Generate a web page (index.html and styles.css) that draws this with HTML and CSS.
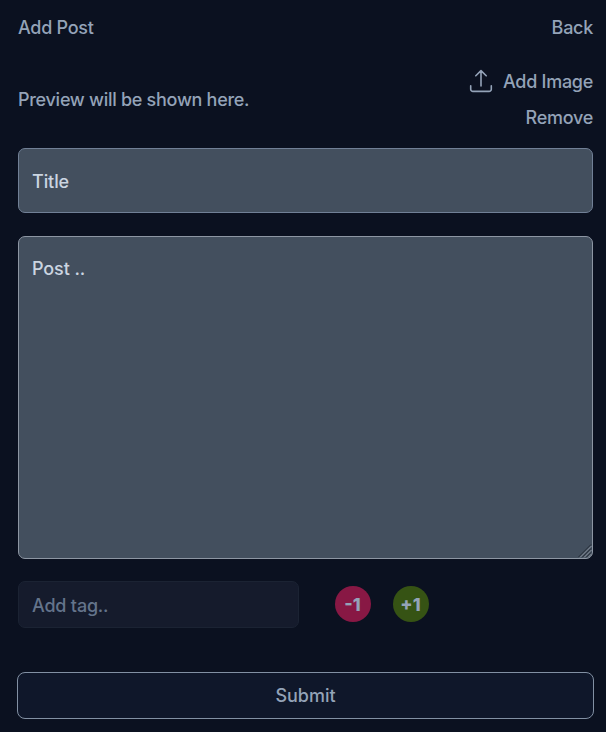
FILE: index.html
```html
<!DOCTYPE html>
<html lang="en">
<head>
<meta charset="utf-8">
<title>Add Post</title>
<link rel="stylesheet" href="styles.css">
</head>
<body>
<main class="page">
  <header class="header"><span>Add Post</span><a class="link">Back</a></header>
  <section class="preview">
    <p class="preview-text">Preview will be shown here.</p>
    <div class="image-actions">
      <label class="upload">
        <svg class="upload-icon" viewBox="0 0 24 24" fill="none" stroke="currentColor" stroke-width="1.6" stroke-linecap="round" stroke-linejoin="round"><path d="M1.7 16.8v3.4a2.2 2.2 0 0 0 2.2 2.2h16.2a2.2 2.2 0 0 0 2.2-2.2v-3.4M12 17V1.6M6.8 6.8 12 1.6l5.2 5.2"/></svg>
        <span>Add Image</span>
      </label>
      <a class="link">Remove</a>
    </div>
  </section>
  <form class="form">
    <input class="field title" placeholder="Title">
    <div class="post-wrap">
      <textarea class="field post" placeholder="Post .."></textarea>
      <svg class="grip" viewBox="0 0 14 14" fill="none"><path class="grip-dark" d="M.5 13 13 .5M4.5 13 13 4.5M8.5 13 13 8.5"/><path class="grip-light" d="M2 13.5 13.5 2M6 13.5 13.5 6M10 13.5l3.5-3.5"/></svg>
    </div>
    <div class="tags">
      <input class="field tag" placeholder="Add tag..">
      <button type="button" class="round minus">-1</button>
      <button type="button" class="round plus">+1</button>
    </div>
    <button type="button" class="submit">Submit</button>
  </form>
</main>
</body>
</html>
```
FILE: styles.css
```css
* { box-sizing: border-box; }
body {
  margin: 0;
  background: #0b1120;
  color: #94a3b8;
  font: 450 18px/36px Inter, sans-serif;
  letter-spacing: -0.28px;
}
.page { padding: 10px 12px 0 17px; }
.header { display: flex; justify-content: space-between; padding: 0 1px; }
.preview {
  display: flex;
  justify-content: space-between;
  align-items: center;
  margin-top: 18px;
  padding: 0 1px;
}
.preview-text { margin: 0; }
.image-actions { display: flex; flex-direction: column; align-items: flex-end; }
.upload { display: flex; align-items: center; gap: 10px; }
.upload-icon { width: 24px; height: 24px; margin-top: -2px; }
.form { display: flex; flex-direction: column; margin-top: 12px; }
.field {
  display: block;
  width: 100%;
  margin: 0;
  padding: 0 13px;
  border: 1px solid #718096;
  border-radius: 7px;
  background: #434f5e;
  color: #cbd5e1;
  font: inherit;
  letter-spacing: -0.1px;
  outline: none;
}
.field::placeholder { color: #cbd5e1; opacity: 1; }
.title { width: auto; height: 65px; margin: 0 1px; padding-top: 2px; }
.post-wrap { position: relative; margin: 23px 1px 0; }
.post { height: 323px; padding-top: 14px; border-color: #8d96a3; resize: none; }
.grip { position: absolute; right: 1px; bottom: 1px; width: 14px; height: 14px; }
.grip-dark { stroke: #252c37; }
.grip-light { stroke: #8e96a1; }
.tags { display: flex; align-items: center; margin: 22px 1px 0; }
.tag { width: 281px; height: 47px; margin-right: 36px; padding-top: 1px; letter-spacing: -0.2px; background: #151b2c; border-color: #1b2333; }
.tag::placeholder { color: #64748b; }
.round {
  width: 36px;
  height: 36px;
  margin: -1px 22px 0 0;
  padding: 0 1px 0 0;
  border: 0;
  border-radius: 50%;
  color: #94a3b8;
  font: 800 18px/38px Inter, sans-serif;
}
.minus { background: #881844; }
.plus { background: #365314; }
.submit {
  height: 47px;
  margin-top: 44px;
  padding: 1px 0 0;
  border: 1px solid #8290a3;
  border-radius: 8px;
  background: #0f172a;
  color: #94a3b8;
  font: inherit;
}
```
